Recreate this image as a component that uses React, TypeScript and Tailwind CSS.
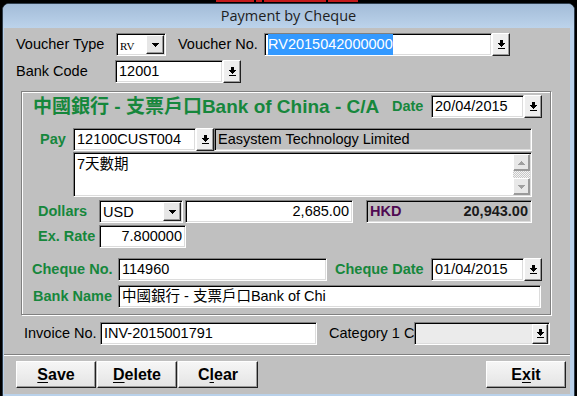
import React from "react";

const sunken =
  "border border-t-[#808080] border-l-[#808080] border-b-white border-r-white shadow-[inset_1px_1px_0_#000,inset_-1px_-1px_0_#dcdcdc]";
const raised =
  "border border-t-white border-l-white border-b-[#202020] border-r-[#202020] shadow-[inset_-1px_-1px_0_#9a9a9a]";

function DownIcon() {
  return (
    <svg width="7" height="9" viewBox="0 0 7 9" shapeRendering="crispEdges">
      <rect x="2" y="0" width="3" height="3" fill="#000" />
      <rect x="0" y="3" width="7" height="1" fill="#000" />
      <rect x="1" y="4" width="5" height="1" fill="#000" />
      <rect x="2" y="5" width="3" height="1" fill="#000" />
      <rect x="3" y="6" width="1" height="1" fill="#000" />
      <rect x="0" y="8" width="7" height="1" fill="#000" />
    </svg>
  );
}

function Tri({ up = false, color = "#000" }: { up?: boolean; color?: string }) {
  return (
    <svg
      width="7"
      height="4"
      viewBox="0 0 7 4"
      shapeRendering="crispEdges"
      className={up ? "rotate-180" : ""}
    >
      <rect x="0" y="0" width="7" height="1" fill={color} />
      <rect x="1" y="1" width="5" height="1" fill={color} />
      <rect x="2" y="2" width="3" height="1" fill={color} />
      <rect x="3" y="3" width="1" height="1" fill={color} />
    </svg>
  );
}

function PickBtn() {
  return (
    <div className={`w-[18px] h-[23px] shrink-0 bg-[#eeeeee] flex items-center justify-center ${raised}`}>
      <DownIcon />
    </div>
  );
}

function Field({
  w,
  children,
  right = false,
  className = "",
}: {
  w: string;
  children?: React.ReactNode;
  right?: boolean;
  className?: string;
}) {
  return (
    <div
      className={`${w} h-[23px] shrink-0 bg-white ${sunken} flex items-center px-[3px] text-[14.5px] text-black whitespace-nowrap overflow-hidden ${
        right ? "justify-end" : ""
      } ${className}`}
    >
      {children}
    </div>
  );
}

function Combo({ w, children }: { w: string; children: React.ReactNode }) {
  return (
    <div className={`${w} h-[23px] shrink-0 bg-white ${sunken} flex items-center pl-[3px] pr-[1px]`}>
      <div className="flex-1 whitespace-nowrap overflow-hidden">{children}</div>
      <div className={`w-[18px] h-[19px] bg-[#e6e6e6] flex items-center justify-center ${raised}`}>
        <Tri />
      </div>
    </div>
  );
}

function GreenLabel({ w, children }: { w: string; children: React.ReactNode }) {
  return (
    <div className={`${w} shrink-0 text-[14.5px] leading-[23px] font-bold text-[#16873c] whitespace-nowrap`}>
      {children}
    </div>
  );
}

function Label({ w, children }: { w: string; children: React.ReactNode }) {
  return <div className={`${w} shrink-0 text-[14.5px] leading-[23px] text-black whitespace-nowrap`}>{children}</div>;
}

function CmdButton({ children }: { children: React.ReactNode }) {
  return (
    <div
      className={`w-[80px] h-[27px] bg-gradient-to-b from-[#f6f6f6] to-[#e4e4e4] ${raised} flex items-center justify-center text-[16px] font-bold text-black`}
    >
      {children}
    </div>
  );
}

export default function App() {
  return (
    <div className="w-[577px] h-[396px] bg-black overflow-hidden font-['Liberation_Sans','Noto_Sans_CJK_TC',sans-serif]">
      {/* edge of the window behind, only its last pixels show */}
      <div className="h-[3px] overflow-hidden flex gap-[2px] pl-[216px] pt-[0px]">
        <div className="w-[38px] h-[2px] bg-[#c41a1a]" />
        <div className="w-[6px] h-[2px] bg-[#c41a1a]" />
        <div className="w-[62px] h-[2px] bg-[#c41a1a]" />
        <div className="w-[30px] h-[2px] bg-[#c41a1a]" />
      </div>
      <div className="ml-[2px] w-[573px] h-[400px] rounded-t-[7px] border border-[#2f3e4d] bg-[#b9d1ea] flex flex-col overflow-hidden">
        <div className="h-[24px] shrink-0 bg-gradient-to-b from-[#a3bcd8] to-[#bcd3eb] flex items-center justify-center text-[14.5px] text-[#1e1e1e] font-['Open_Sans',sans-serif]">
          Payment by Cheque
        </div>
        <div className="ml-[1px] mr-[4px] h-[366px] shrink-0 bg-[#c0c0c0] flex flex-col">
          {/* voucher row */}
          <div className="mt-[5px] h-[23px] flex items-center pl-[12px]">
            <Label w="w-[100px]">Voucher Type</Label>
            <Combo w="w-[50px]">
              <span className="font-['Liberation_Serif',serif] text-[11px]">RV</span>
            </Combo>
            <Label w="w-[86px] ml-[12px]">Voucher No.</Label>
            <Field w="w-[228px]">
              <span className="bg-[#3399ff] text-white">RV2015042000000</span>
            </Field>
            <PickBtn />
          </div>
          {/* bank code */}
          <div className="mt-[4px] h-[23px] flex items-center pl-[12px]">
            <Label w="w-[99px]">Bank Code</Label>
            <Field w="w-[108px]">12001</Field>
            <PickBtn />
          </div>

          {/* group box */}
          <div className="mt-[8px] ml-[17px] w-[530px] h-[224px] border border-[#808080] shadow-[inset_1px_1px_0_#fff,1px_1px_0_#fff] flex flex-col">
            <div className="mt-[3px] h-[23px] flex items-center pl-[11px]">
              <div className="w-[359px] shrink-0 text-[19px] leading-[23px] font-bold text-[#16873c] whitespace-nowrap">
                中國銀行 - 支票戶口Bank of China - C/A
              </div>
              <GreenLabel w="w-[39px]">Date</GreenLabel>
              <Field w="w-[93px]">20/04/2015</Field>
              <PickBtn />
            </div>

            <div className="mt-[10px] h-[23px] flex items-center pl-[18px]">
              <GreenLabel w="w-[33px]">Pay</GreenLabel>
              <Field w="w-[123px]">12100CUST004</Field>
              <PickBtn />
              <Field w="w-[318px]" className="!bg-[#c0c0c0]">
                Easystem Technology Limited
              </Field>
            </div>

            <div className="mt-[1px] pl-[51px]">
              <div className={`w-[459px] h-[45px] bg-white ${sunken} flex`}>
                <div className="flex-1 px-[3px] pt-[2px] text-[14.5px] text-black leading-[18px]">7天數期</div>
                <div className="w-[17px] mt-[1px] mr-[1px] flex flex-col">
                  <div className={`h-[17px] bg-[#e8e8e8] ${raised} !border-b-[#9a9a9a] !border-r-[#9a9a9a] flex items-center justify-center`}>
                    <Tri up color="#a0a0a0" />
                  </div>
                  <div className="flex-1 bg-[repeating-conic-gradient(#c8c8c8_0_25%,#f4f4f4_0_50%)] bg-[length:2px_2px]" />
                  <div className={`h-[17px] mb-[1px] bg-[#e8e8e8] ${raised} !border-b-[#9a9a9a] !border-r-[#9a9a9a] flex items-center justify-center`}>
                    <Tri color="#a0a0a0" />
                  </div>
                </div>
              </div>
            </div>

            <div className="mt-[3px] h-[23px] flex items-center pl-[16px]">
              <GreenLabel w="w-[61px]">Dollars</GreenLabel>
              <Combo w="w-[84px]">
                <span className="text-[14.5px]">USD</span>
              </Combo>
              <Field w="w-[168px] ml-[2px]" right>
                2,685.00
              </Field>
              <div className={`ml-[13px] w-[166px] h-[23px] bg-[#c0c0c0] ${sunken} flex items-center justify-between px-[3px] text-[14.5px] font-bold`}>
                <span className="text-[#4f0a52]">HKD</span>
                <span className="text-[#1a1a1a]">20,943.00</span>
              </div>
            </div>

            <div className="mt-[2px] h-[23px] flex items-center pl-[16px]">
              <GreenLabel w="w-[61px]">Ex. Rate</GreenLabel>
              <Field w="w-[87px]" right>
                7.800000
              </Field>
            </div>

            <div className="mt-[10px] h-[23px] flex items-center pl-[10px]">
              <GreenLabel w="w-[86px]">Cheque No.</GreenLabel>
              <Field w="w-[209px]">114960</Field>
              <GreenLabel w="w-[96px] ml-[8px]">Cheque Date</GreenLabel>
              <Field w="w-[93px]">01/04/2015</Field>
              <PickBtn />
            </div>

            <div className="mt-[4px] h-[23px] flex items-center pl-[11px]">
              <GreenLabel w="w-[85px]">Bank Name</GreenLabel>
              <Field w="w-[423px]">中國銀行 - 支票戶口Bank of Chi</Field>
            </div>
          </div>

          {/* invoice row */}
          <div className="mt-[7px] h-[23px] flex items-center pl-[20px]">
            <Label w="w-[76px]">Invoice No.</Label>
            <Field w="w-[217px]">INV-2015001791</Field>
            <Label w="w-[85px] ml-[12px]">Category 1 C</Label>
            <div className={`w-[136px] h-[23px] bg-[#ebebeb] ${sunken} flex justify-end items-center pr-[1px]`}>
              <div className={`w-[16px] h-[20px] bg-[#eeeeee] ${raised} flex items-center justify-center`}>
                <DownIcon />
              </div>
            </div>
          </div>

          <div className="mt-[9px] h-[1px] bg-[#808080] shadow-[0_1px_0_#fff]" />

          <div className="mt-[6px] flex items-center pl-[12px] pr-[4px]">
            <div className="flex gap-[1px]">
              <CmdButton>
                <span className="underline underline-offset-2">S</span>ave
              </CmdButton>
              <CmdButton>
                <span className="underline underline-offset-2">D</span>elete
              </CmdButton>
              <CmdButton>
                C<span className="underline underline-offset-2">l</span>ear
              </CmdButton>
            </div>
            <div className="ml-auto">
              <CmdButton>
                E<span className="underline underline-offset-2">x</span>it
              </CmdButton>
            </div>
          </div>
        </div>
      </div>
    </div>
  );
}
